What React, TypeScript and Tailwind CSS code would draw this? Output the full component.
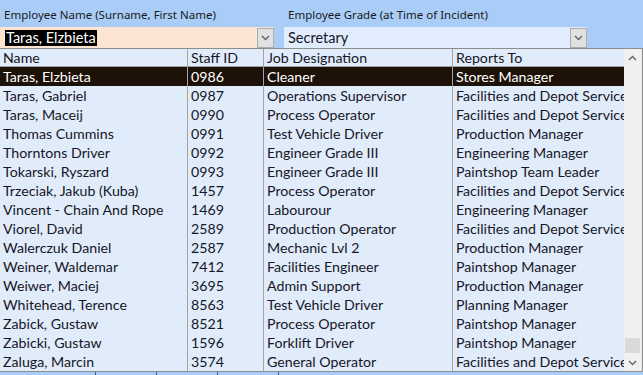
import React from 'react';

const rows: [string, string, string, string][] = [
  ['Taras, Elzbieta', '0986', 'Cleaner', 'Stores Manager'],
  ['Taras, Gabriel', '0987', 'Operations Supervisor', 'Facilities and Depot Services Manager'],
  ['Taras, Maceij', '0990', 'Process Operator', 'Facilities and Depot Services Manager'],
  ['Thomas Cummins', '0991', 'Test Vehicle Driver', 'Production Manager'],
  ['Thorntons Driver', '0992', 'Engineer Grade III', 'Engineering Manager'],
  ['Tokarski, Ryszard', '0993', 'Engineer Grade III', 'Paintshop Team Leader'],
  ['Trzeciak, Jakub (Kuba)', '1457', 'Process Operator', 'Facilities and Depot Services Manager'],
  ['Vincent - Chain And Rope', '1469', 'Labourour', 'Engineering Manager'],
  ['Viorel, David', '2589', 'Production Operator', 'Facilities and Depot Services Manager'],
  ['Walerczuk Daniel', '2587', 'Mechanic Lvl 2', 'Production Manager'],
  ['Weiner, Waldemar', '7412', 'Facilities Engineer', 'Paintshop Manager'],
  ['Weiwer, Maciej', '3695', 'Admin Support', 'Production Manager'],
  ['Whitehead, Terence', '8563', 'Test Vehicle Driver', 'Planning Manager'],
  ['Zabick, Gustaw', '8521', 'Process Operator', 'Paintshop Manager'],
  ['Zabicki, Gustaw', '1596', 'Forklift Driver', 'Paintshop Manager'],
  ['Zaluga, Marcin', '3574', 'General Operator', 'Facilities and Depot Services Manager'],
];

const cols = 'grid grid-cols-[188px_76px_189px_171px]';
const cell = 'px-[3px] whitespace-nowrap overflow-hidden border-r border-[#a3a3a3] last:border-r-0';

function Chevron({ up = false }: { up?: boolean }) {
  return (
    <svg width="9" height="6" viewBox="0 0 9 6" className={up ? 'rotate-180' : ''}>
      <path d="M1 1 L4.5 4.5 L8 1" fill="none" stroke="#606060" strokeWidth="1.3" />
    </svg>
  );
}

function DropButton() {
  return (
    <div className="w-[17px] h-[20px] bg-[#e1e1e1] border border-[#adadad] flex items-center justify-center">
      <Chevron />
    </div>
  );
}

export default function App() {
  return (
    <div className="w-[643px] h-[375px] bg-[#a9cdf7] overflow-hidden font-['Lato',sans-serif] text-[#161626]">
      {/* Labels */}
      <div className="flex h-[27px] pt-[6px] text-[11.5px] font-['Noto_Sans',sans-serif] text-[#1a1a1a]">
        <div className="w-[288px] pl-[4px]">Employee Name (Surname, First Name)</div>
        <div>Employee Grade (at Time of Incident)</div>
      </div>

      {/* Combo boxes */}
      <div className="flex h-[21px] text-[14.5px]">
        <div className="w-[274px] bg-[#fde5d3] flex items-center justify-between">
          <span className="ml-[5px] bg-black text-white leading-[16px] px-[1px]">Taras, Elzbieta</span>
          <DropButton />
        </div>
        <div className="w-[10px]" />
        <div className="w-[303px] bg-[#e1edfc] flex items-center justify-between">
          <span className="ml-[4px] leading-[16px]">Secretary</span>
          <DropButton />
        </div>
      </div>

      {/* Dropdown list */}
      <div className="flex w-[643px] h-[324px] bg-[#e1ecfb] border border-[#8e8e8e] border-l-0 text-[14.2px]">
        <div className="w-[624px]">
          <div className={`${cols} h-[18px] leading-[18px] border-b border-[#a3a3a3]`}>
            <div className={cell}>Name</div>
            <div className={cell}>Staff ID</div>
            <div className={cell}>Job Designation</div>
            <div className={cell}>Reports To</div>
          </div>
          {rows.map((r, i) => (
            <div
              key={i}
              className={`${cols} h-[19px] leading-[19px] ${i === 0 ? 'bg-[#1e1208] text-white' : ''}`}
            >
              {r.map((c, j) => (
                <div key={j} className={`${cell} ${i === 0 ? 'border-[#6a6460]' : ''}`}>
                  {c}
                </div>
              ))}
            </div>
          ))}
        </div>

        {/* Scrollbar */}
        <div className="w-[17px] bg-[#f0f0f0] flex flex-col items-center">
          <div className="h-[17px] flex items-center justify-center">
            <Chevron up />
          </div>
          <div className="flex-1 w-full flex flex-col justify-end items-center">
            <div className="w-[15px] h-[15px] bg-[#dadada] mb-[1px]" />
          </div>
          <div className="h-[17px] flex items-center justify-center">
            <Chevron />
          </div>
        </div>
      </div>

      {/* Peeking content below */}
      <div className="flex h-[3px] gap-[60px] pl-[95px]">
        <div className="w-px h-full bg-[#555]" />
        <div className="w-px h-full bg-[#555]" />
        <div className="w-px h-full bg-[#555]" />
        <div className="w-px h-full bg-[#555]" />
      </div>
    </div>
  );
}
